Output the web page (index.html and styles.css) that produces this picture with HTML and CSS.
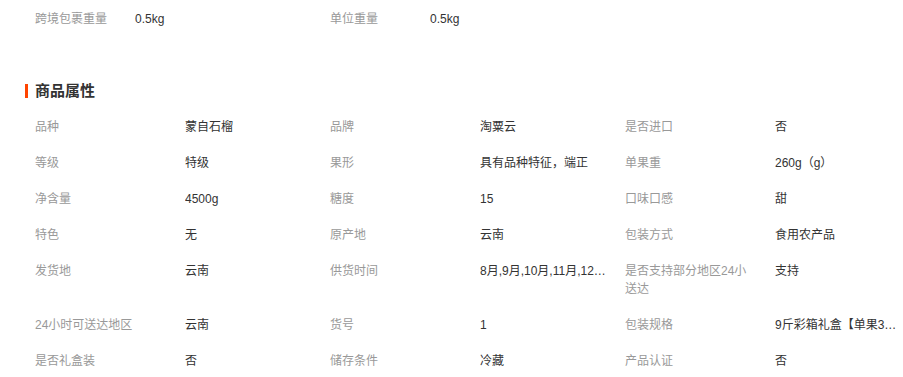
FILE: index.html
```html
<!DOCTYPE html>
<html lang="zh-CN">
<head>
<meta charset="utf-8">
<title>商品属性</title>
<link rel="stylesheet" href="styles.css">
</head>
<body>
<div class="page">
  <div class="top-row">
    <span class="top-label">跨境包裹重量</span><span class="top-value">0.5kg</span>
    <span class="top-label">单位重量</span><span class="top-value">0.5kg</span>
  </div>
  <h2 class="section-title"><span class="bar"></span>商品属性</h2>
  <div class="attrs">
    <div class="k">品种</div><div class="v">蒙自石榴</div>
    <div class="k">品牌</div><div class="v">淘粟云</div>
    <div class="k">是否进口</div><div class="v">否</div>

    <div class="k">等级</div><div class="v">特级</div>
    <div class="k">果形</div><div class="v">具有品种特征，端正</div>
    <div class="k">单果重</div><div class="v">260g（g）</div>

    <div class="k">净含量</div><div class="v">4500g</div>
    <div class="k">糖度</div><div class="v">15</div>
    <div class="k">口味口感</div><div class="v">甜</div>

    <div class="k">特色</div><div class="v">无</div>
    <div class="k">原产地</div><div class="v">云南</div>
    <div class="k">包装方式</div><div class="v">食用农产品</div>

    <div class="k">发货地</div><div class="v">云南</div>
    <div class="k">供货时间</div><div class="v">8月,9月,10月,11月,12月,1月,2月</div>
    <div class="k">是否支持部分地区24小送达</div><div class="v">支持</div>

    <div class="k">24小时可送达地区</div><div class="v">云南</div>
    <div class="k">货号</div><div class="v">1</div>
    <div class="k">包装规格</div><div class="v">9斤彩箱礼盒【单果300g以上】</div>

    <div class="k">是否礼盒装</div><div class="v">否</div>
    <div class="k">储存条件</div><div class="v">冷藏</div>
    <div class="k">产品认证</div><div class="v">否</div>
  </div>
</div>
</body>
</html>
```
FILE: styles.css
```css
html, body {
  margin: 0;
  padding: 0;
  background: #fff;
}
body {
  font-family: "Liberation Sans", "Noto Sans CJK SC", sans-serif;
  font-size: 12px;
  color: #333;
}
.page {
  padding-left: 35px;
  overflow: hidden;
  width: 868px;
}
.top-row {
  display: flex;
  padding-top: 10px;
  line-height: 18px;
}
.top-label {
  width: 100px;
  color: #999;
}
.top-value {
  width: 195px;
  color: #333;
}
.section-title {
  display: flex;
  align-items: center;
  margin: 53px 0 0 -10px;
  font-size: 15px;
  line-height: 20px;
  font-weight: bold;
  color: #333;
}
.bar {
  width: 3px;
  height: 14px;
  background: #ff4400;
  margin-right: 7px;
}
.attrs {
  display: grid;
  grid-template-columns: 150px 145px 150px 145px 150px 128px;
  margin-top: 8px;
  line-height: 18px;
}
.k, .v {
  padding: 9px 0;
}
.k {
  color: #999;
  padding-right: 20px;
}
.v {
  color: #333;
  white-space: nowrap;
  overflow: hidden;
  text-overflow: ellipsis;
  padding-right: 18px;
}
.v:nth-child(6n) {
  padding-right: 0;
}
```
